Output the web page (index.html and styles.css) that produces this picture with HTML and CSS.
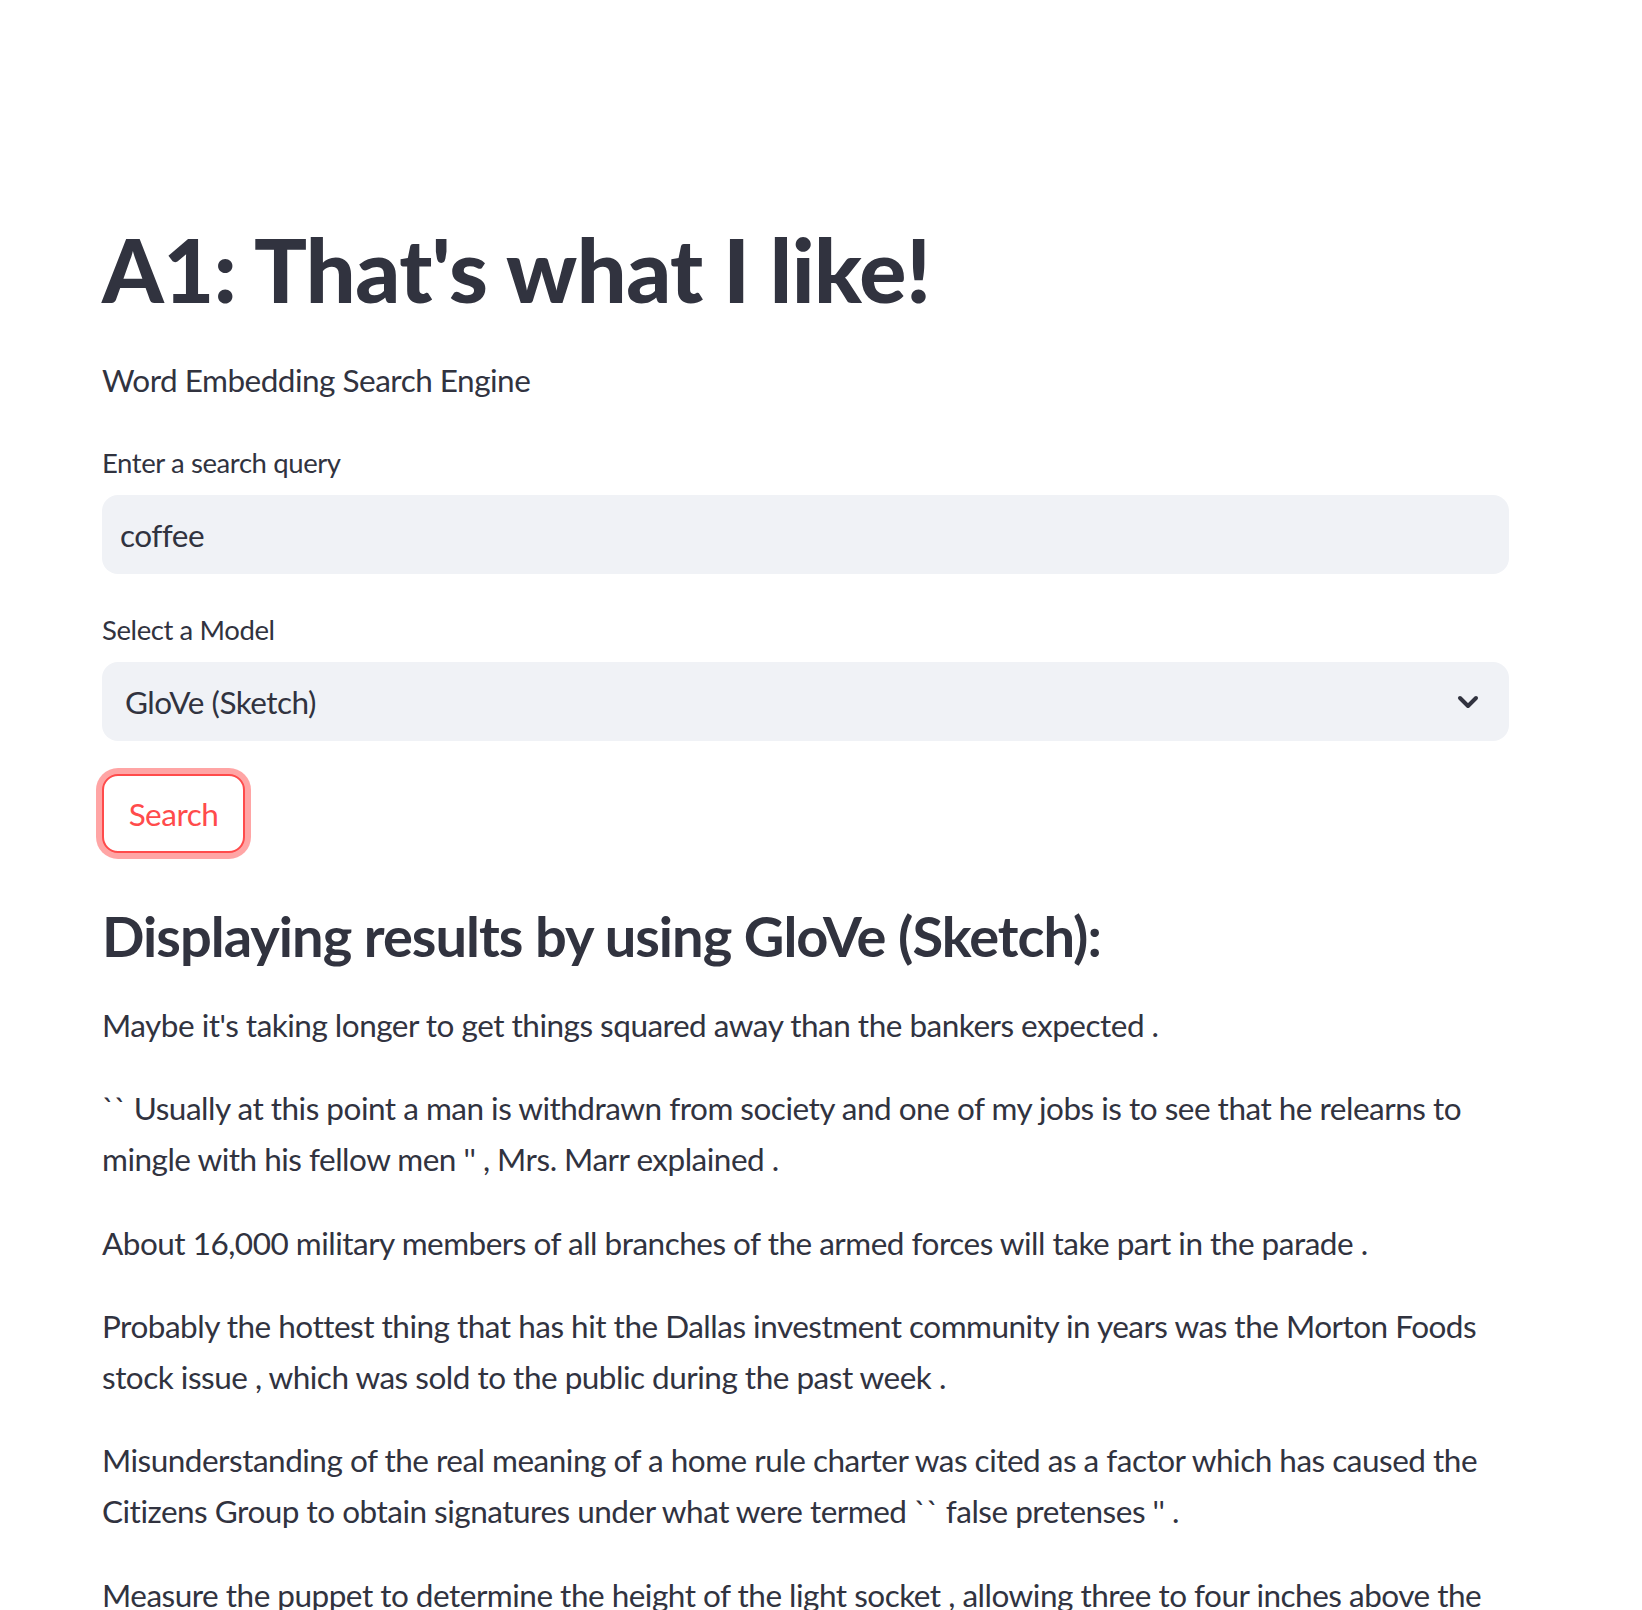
FILE: index.html
```html
<!DOCTYPE html>
<html lang="en">
<head>
<meta charset="utf-8">
<title>A1: That's what I like!</title>
<link rel="stylesheet" href="styles.css">
</head>
<body>
<main class="main">
  <h1 class="title">A1: That's what I like!</h1>
  <p class="subtitle">Word Embedding Search Engine</p>

  <div class="field">
    <label class="label" for="q">Enter a search query</label>
    <div class="input-box"><input id="q" class="input" type="text" value="coffee"></div>
  </div>

  <div class="field">
    <div class="label">Select a Model</div>
    <div class="select-box">
      <span class="select-value">GloVe (Sketch)</span>
      <svg class="chevron" width="22" height="14" viewBox="0 0 22 14" aria-hidden="true">
        <path d="M3 3 L11 11 L19 3" fill="none" stroke="#31333f" stroke-width="4" stroke-linecap="round" stroke-linejoin="round"/>
      </svg>
    </div>
  </div>

  <div class="btn-row"><button class="btn" type="button">Search</button></div>

  <h3 class="results-title">Displaying results by using GloVe (Sketch):</h3>

  <div class="results">
    <p>Maybe it's taking longer to get things squared away than the bankers expected .</p>
    <p>`` Usually at this point a man is withdrawn from society and one of my jobs is to see that he relearns to mingle with his fellow men '' , Mrs. Marr explained .</p>
    <p>About 16,000 military members of all branches of the armed forces will take part in the parade .</p>
    <p>Probably the hottest thing that has hit the Dallas investment community in years was the Morton Foods stock issue , which was sold to the public during the past week .</p>
    <p>Misunderstanding of the real meaning of a home rule charter was cited as a factor which has caused the Citizens Group to obtain signatures under what were termed `` false pretenses '' .</p>
    <p>Measure the puppet to determine the height of the light socket , allowing three to four inches above the puppet's head .</p>
  </div>
</main>
</body>
</html>
```

FILE: styles.css
```css
html, body {
  margin: 0;
  padding: 0;
  background: #ffffff;
}

body {
  font-family: "Lato", "Noto Sans", sans-serif;
  color: #31333f;
}

.main {
  width: 1407px;
  padding: 216px 0 0 102px;
  display: flex;
  flex-direction: column;
}

.title {
  margin: 0;
  font-size: 88px;
  line-height: 106px;
  font-weight: 900;
  letter-spacing: -0.5px;
}

.subtitle {
  margin: 33px 0 0 0;
  font-size: 31.5px;
  letter-spacing: -0.5px;
  line-height: 51px;
}

.field {
  display: flex;
  flex-direction: column;
  gap: 12px;
}

.field:first-of-type {
  margin-top: 37px;
}

.field + .field {
  margin-top: 36px;
}

.label {
  font-size: 27.5px;
  letter-spacing: -0.4px;
  line-height: 40px;
}

.input-box,
.select-box {
  height: 79px;
  border-radius: 16px;
  background: #f0f2f6;
  display: flex;
  align-items: center;
  box-sizing: border-box;
}

.input {
  border: none;
  background: transparent;
  outline: none;
  width: 100%;
  padding: 0 18px;
  font-family: inherit;
  font-size: 31.5px;
  letter-spacing: -0.5px;
  color: #31333f;
}

.select-box {
  padding: 0 30px 0 23px;
  justify-content: space-between;
}

.select-value {
  font-size: 31.5px;
  letter-spacing: -0.5px;
}

.chevron {
  display: block;
}

.btn-row {
  margin-top: 33px;
  display: flex;
}

.btn {
  width: 143px;
  height: 79px;
  border: 2px solid #ff4b4b;
  border-radius: 16px;
  background: #ffffff;
  color: #ff4b4b;
  font-family: inherit;
  font-size: 31.5px;
  letter-spacing: -0.5px;
  box-shadow: 0 0 0 6px rgba(255, 75, 75, 0.5);
  padding: 0;
}

.results-title {
  margin: 49px 0 0 0;
  font-size: 56px;
  line-height: 67px;
  font-weight: 700;
  letter-spacing: -1px;
}

.results {
  margin-top: 31px;
}

.results p {
  margin: 0 0 32px 0;
  font-size: 31.5px;
  letter-spacing: -0.5px;
  line-height: 51.2px;
}
```
